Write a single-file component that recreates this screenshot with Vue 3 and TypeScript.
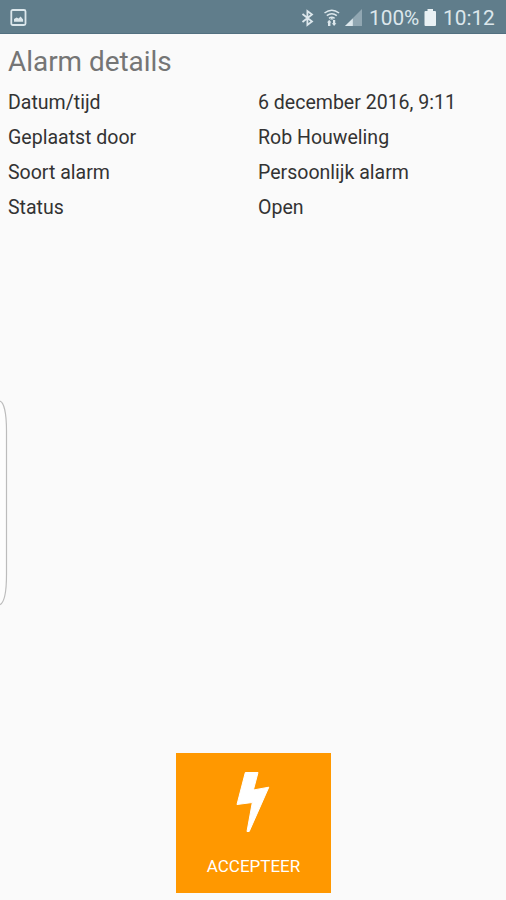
<script setup lang="ts">
interface Detail {
  label: string
  value: string
}

const details: Detail[] = [
  { label: 'Datum/tijd', value: '6 december 2016, 9:11' },
  { label: 'Geplaatst door', value: 'Rob Houweling' },
  { label: 'Soort alarm', value: 'Persoonlijk alarm' },
  { label: 'Status', value: 'Open' },
]
</script>

<template>
  <div class="screen">
    <header class="status-bar">
      <svg class="picture" width="17" height="18" viewBox="0 0 17 18">
        <rect x="1.300" y="1" width="14.200" height="15" rx="1.5" fill="none" stroke="#dce7ec" stroke-width="1.8" />
        <path d="M4 12.800V10l2.600-1.400 2 .8 2-1.800 2.500 2.800v2.400z" fill="#dce7ec" />
      </svg>
      <div class="indicators">
        <svg class="bluetooth" width="13" height="18" viewBox="0 0 13 18">
          <path d="M1.5 5 11 12.5 6.4 16V2L11 5.5 1.5 13" fill="none" stroke="#dce7ec" stroke-width="1.8" />
        </svg>
        <svg class="wifi" width="17" height="18" viewBox="0 0 17 18">
          <g fill="none" stroke="#dce7ec" stroke-width="1.5">
            <path d="M.5 4Q7.800 -1.700 15.100 4" />
            <path d="M2.800 6.700Q7.800 2.600 12.800 6.700" />
            <path d="M5 9.300Q7.800 7.100 10.600 9.300" />
          </g>
          <path d="M7.800 8.500 9.500 10.500H6.100z" fill="#dce7ec" />
          <path d="M5.200 10.800 7.400 13.500H6.400V17H4v-3.500H3zM9 11h2.200v3.300h1.200L10.100 17 7.800 14.300H9z" fill="#dce7ec" />
        </svg>
        <svg class="signal" width="18" height="18" viewBox="0 0 18 18">
          <path d="M0 17 17 0v17z" fill="#91a7b2" />
          <path d="M0 17 7.800 9.400V17z" fill="#dce7ec" />
        </svg>
        <span class="percent">100%</span>
        <svg class="battery" width="13" height="18" viewBox="0 0 13 18">
          <path d="M3.500 0h5.500v2H11q1 0 1 1v13q0 1-1 1H1.500q-1 0-1-1V3q0-1 1-1h2z" fill="#eaf1f4" />
        </svg>
        <span class="clock">10:12</span>
      </div>
    </header>

    <main class="content">
      <h1 class="title">Alarm details</h1>
      <dl class="details">
        <div v-for="item in details" :key="item.label" class="row">
          <dt>{{ item.label }}</dt>
          <dd>{{ item.value }}</dd>
        </div>
      </dl>
    </main>

    <button class="accept" type="button">
      <svg class="bolt" width="34" height="60" viewBox="0 0 34 60">
        <path d="M9.300.5H22L17.400 18 32.800 15.200 13.200 59.500H11L16.300 30.500 1 32.500z" fill="#fff" stroke="#fff" stroke-width="1" stroke-linejoin="round" />
      </svg>
      <span class="accept-label">ACCEPTEER</span>
    </button>

    <svg class="edge-handle" width="9" height="206" viewBox="0 0 9 206">
      <path d="M-1 1C4 1 6.500 13 6.500 31V174C6.500 192 4 204 -1 205" fill="#fdfdfd" stroke="#bcbcbc" stroke-width="1.200" />
    </svg>
  </div>
</template>

<style>
body {
  margin: 0;
  background: #fafafa;
}
</style>

<style scoped>
.screen {
  position: relative;
  display: flex;
  flex-direction: column;
  box-sizing: border-box;
  width: 100%;
  height: 900px;
  padding-bottom: 7px;
  overflow: hidden;
  background: #fafafa;
  font-family: Roboto, "Liberation Sans", sans-serif;
}

.status-bar {
  display: flex;
  flex: none;
  justify-content: space-between;
  align-items: flex-start;
  box-sizing: border-box;
  height: 34px;
  padding: 9px 10px 0 10px;
  border-bottom: 1px solid #527080;
  background: #607d8b;
  color: #dce7ec;
}

.status-bar svg {
  display: block;
  flex: none;
}

.indicators {
  display: flex;
  font-size: 20.800px;
  line-height: 19px;
  white-space: nowrap;
}

.wifi {
  margin-left: 10px;
}

.signal {
  margin-left: 4px;
}

.percent {
  width: 52px;
  margin-left: 6px;
}

.battery {
  margin-left: 3px;
}

.clock {
  width: 53px;
  margin-left: 6px;
}

.content {
  flex: 1;
  padding: 0 8px;
}

.title {
  margin: 11px 0 7px;
  color: #757575;
  font-size: 27.900px;
  font-weight: 400;
  line-height: 33px;
}

.details {
  margin: 0;
  color: #333;
  font-size: 19.550px;
}

.row {
  display: grid;
  grid-template-columns: 250px 1fr;
  height: 35px;
  line-height: 35px;
}

dd {
  margin: 0;
}

.accept {
  display: flex;
  flex: none;
  flex-direction: column;
  align-items: center;
  align-self: flex-start;
  box-sizing: border-box;
  width: 155px;
  height: 140px;
  margin-left: 176px;
  padding: 19px 0 0;
  border: 0;
  background: #ff9800;
  color: #fff;
  font-family: inherit;
}

.bolt {
  display: block;
  margin-right: 2px;
}

.accept-label {
  margin-top: 24px;
  font-size: 17px;
  line-height: 20px;
}

.edge-handle {
  position: absolute;
  top: 400px;
  left: 0;
}
</style>
